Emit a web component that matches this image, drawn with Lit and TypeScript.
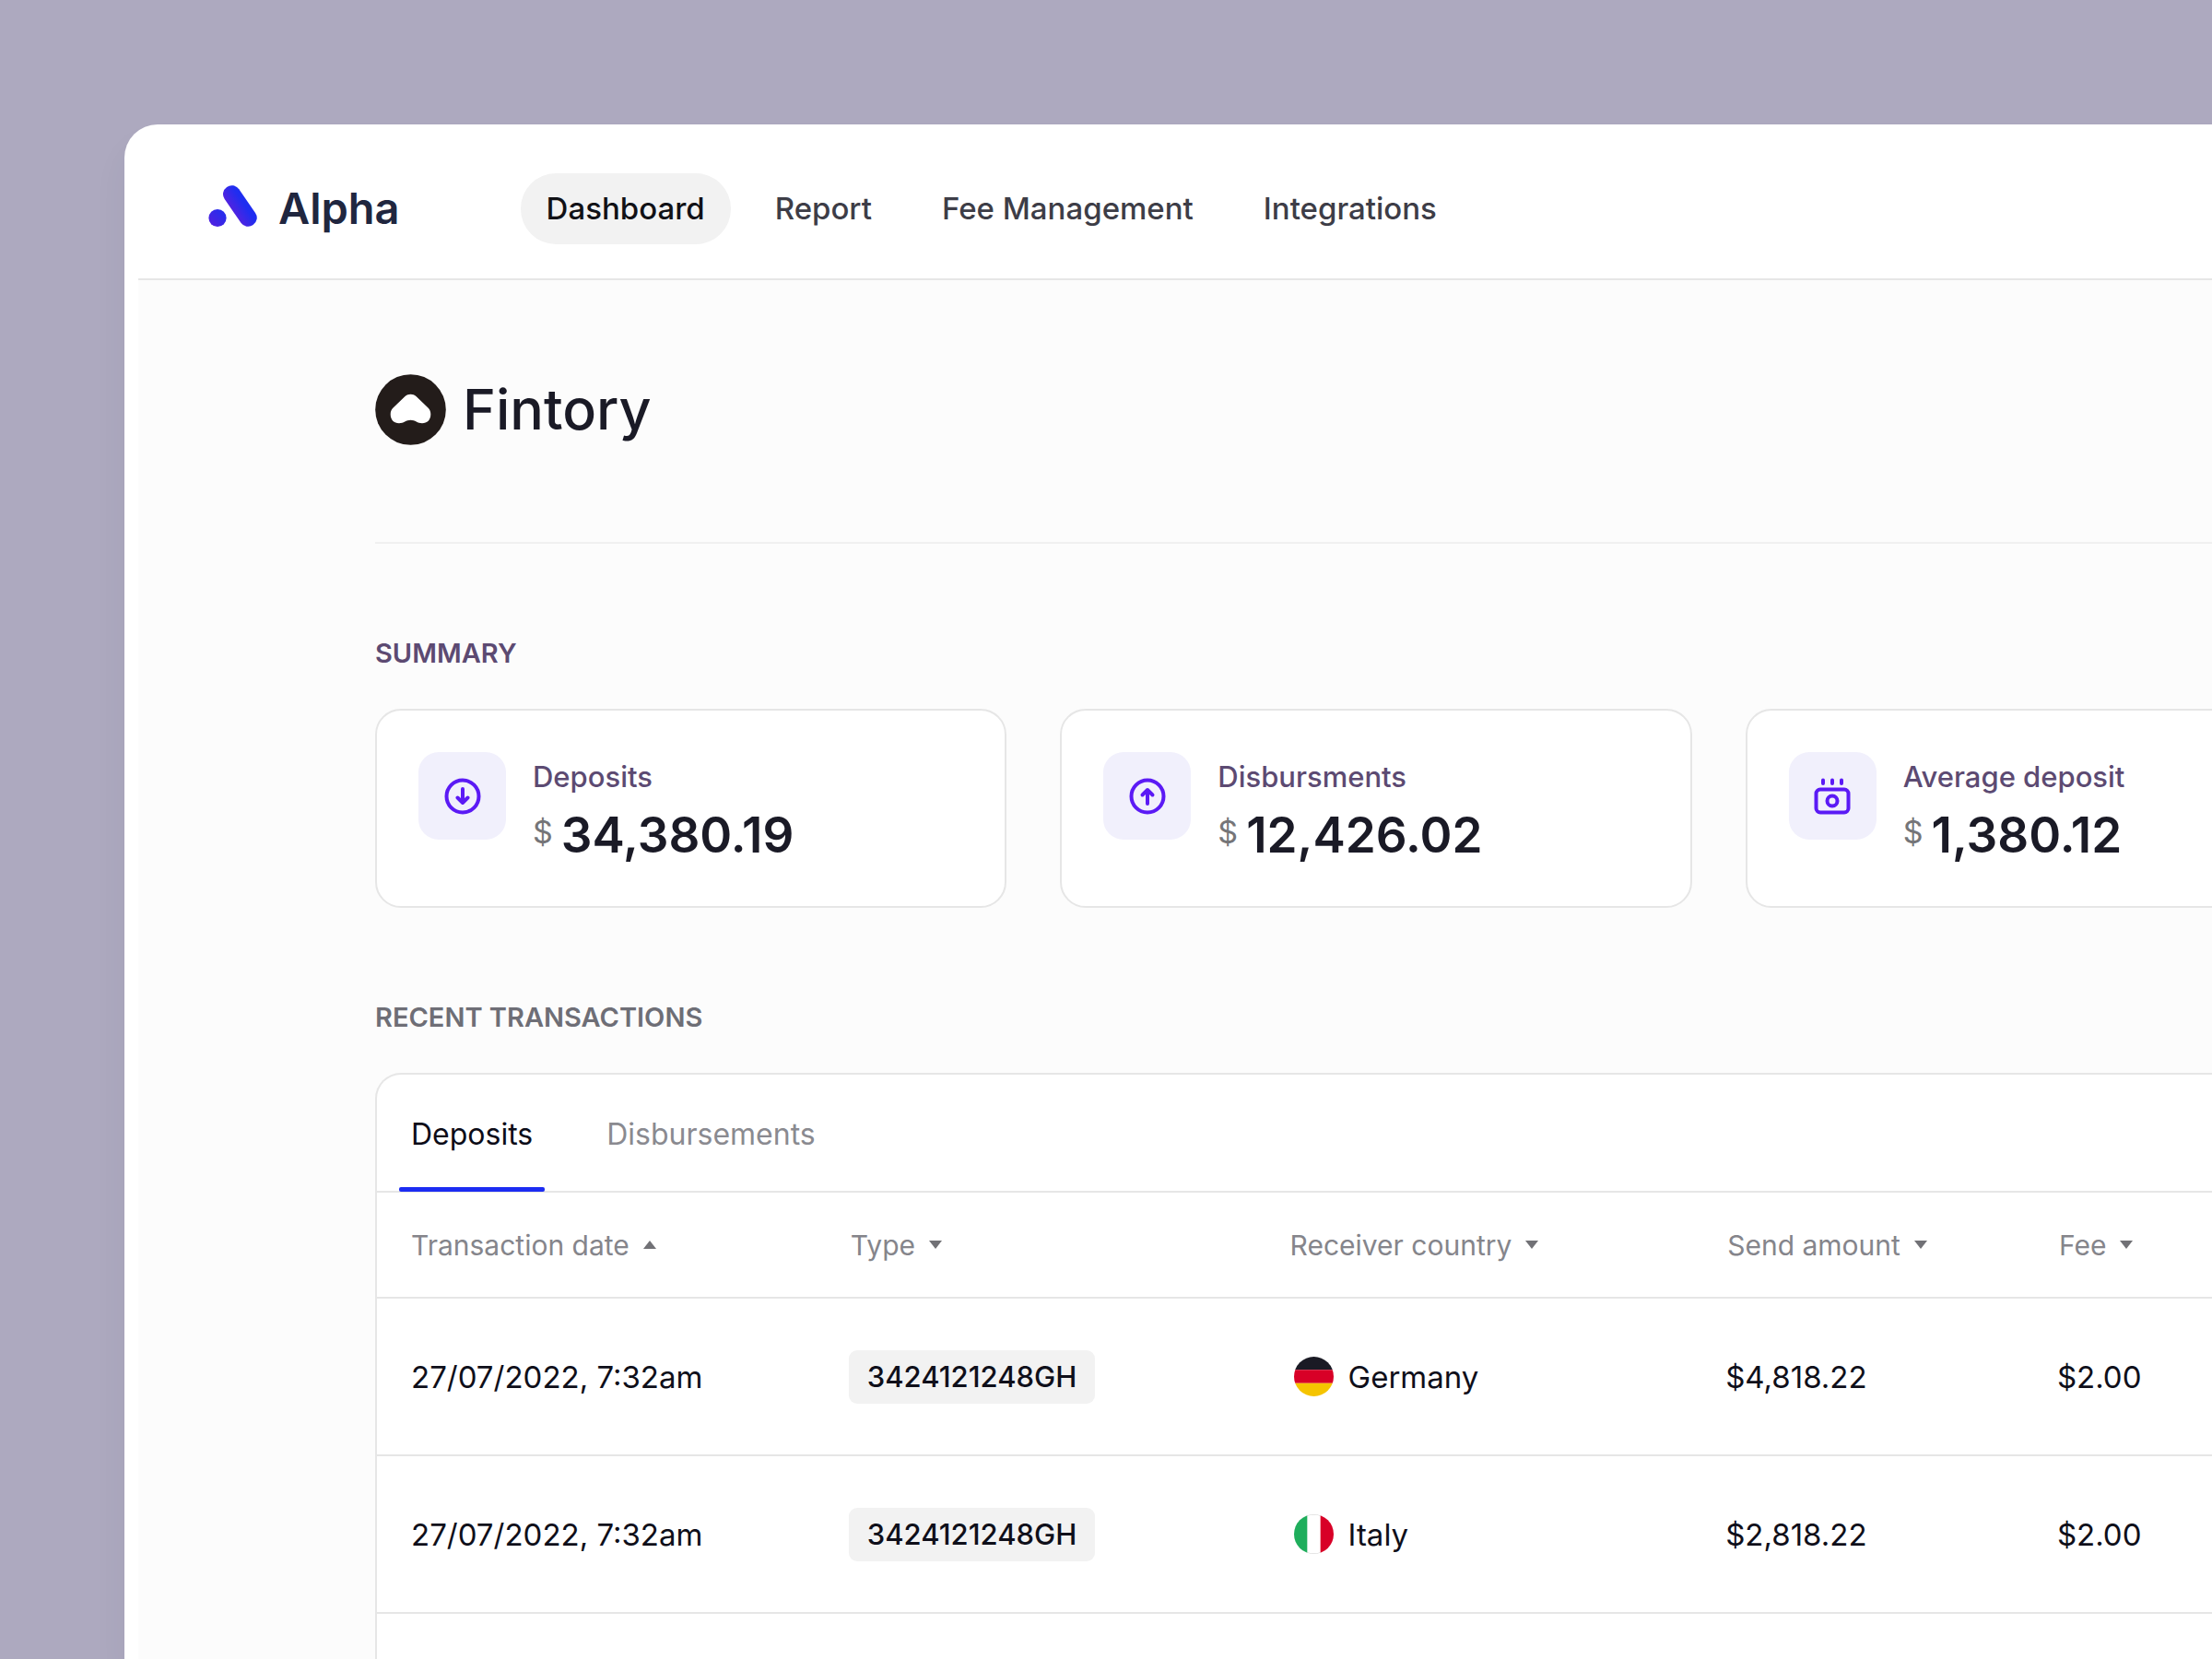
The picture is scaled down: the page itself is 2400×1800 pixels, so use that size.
import { LitElement, html, css, svg } from "lit";
import { customElement, state } from "lit/decorators.js";
import { classMap } from "lit/directives/class-map.js";

const navItems = ["Dashboard", "Report", "Fee Management", "Integrations"];

const icons = {
  down: svg`<circle cx="20" cy="20" r="17.5"/><path d="M20 12V27M14.500 21.500L20 27l5.500-5.500"/>`,
  up: svg`<circle cx="20" cy="20" r="17.500"/><path d="M20 28V13M14.500 18.500L20 13l5.500 5.500"/>`,
  cash: svg`<rect x="2.500" y="12.500" width="35" height="25" rx="4.500"/><circle cx="20" cy="25" r="5.500"/><path d="M10 2.500v3.500M20 2.500v3.500M30 2.500v3.500"/>`,
};

const stats = [
  { label: "Deposits", value: "34,380.19", icon: icons.down },
  { label: "Disbursments", value: "12,426.02", icon: icons.up },
  { label: "Average deposit", value: "1,380.12", icon: icons.cash },
];

const tabs = ["Deposits", "Disbursements"];

const columns = [
  { label: "Transaction date", cls: "c-date", ascending: true },
  { label: "Type", cls: "c-type", ascending: false },
  { label: "Receiver country", cls: "c-country", ascending: false },
  { label: "Send amount", cls: "c-amount", ascending: false },
  { label: "Fee", cls: "c-fee", ascending: false },
];

const flags = {
  Germany: svg`<path fill="#1a1a24" d="M0 0h42v14H0z"/><path fill="#d80027" d="M0 14h42v14H0z"/><path fill="#f5c400" d="M0 28h42v14H0z"/>`,
  Italy: svg`<path fill="#fff" d="M0 0h42v42H0z"/><path fill="#1fae5c" d="M0 0h14v42H0z"/><path fill="#d80027" d="M28 0h14v42H28z"/><path d="M14 1.200a21 21 0 0 1 14 0M14 40.800a21 21 0 0 0 14 0" fill="none" stroke="#000" stroke-opacity=".2"/>`,
};

const rows: { date: string; type: string; country: keyof typeof flags; amount: string; fee: string }[] = [
  { date: "27/07/2022, 7:32am", type: "3424121248GH", country: "Germany", amount: "$4,818.22", fee: "$2.00" },
  { date: "27/07/2022, 7:32am", type: "3424121248GH", country: "Italy", amount: "$2,818.22", fee: "$2.00" },
];

@customElement("app-header")
export class AppHeader extends LitElement {
  static styles = css`
    :host { display: block; }
    .bar { display: flex; align-items: center; margin-left: 15px; padding: 53px 0 37px 76px; border-bottom: 2px solid #e6e6e6; }
    .brand { display: flex; align-items: center; gap: 22px; color: #20263f; text-decoration: none; font-size: 47px; font-weight: 600; line-height: 60px; padding-bottom: 2px; }
    .mark { width: 54px; height: 46px; flex: none; margin-bottom: 3px; }
    .nav { display: flex; gap: 20px; margin-left: 131px; }
    .item { font-size: 33px; line-height: 41px; font-weight: 500; padding: 18px 28px; border-radius: 38px; color: #3d3d47; text-decoration: none; white-space: nowrap; }
    .on { background: #f2f2f2; color: #111116; }
  `;
  render() {
    return html`<header class="bar">
      <a class="brand" href="#">
        <svg class="mark" viewBox="0 0 54 46" aria-hidden="true">
          <defs>
            <linearGradient id="g" gradientUnits="userSpaceOnUse" x1="24" y1="28" x2="38" y2="19">
              <stop offset="0" stop-color="#5722de"/><stop offset="1" stop-color="#1f2df0"/>
            </linearGradient>
            <linearGradient id="d" gradientUnits="userSpaceOnUse" x1="2" y1="42" x2="14" y2="30">
              <stop offset="0" stop-color="#5020e0"/><stop offset="1" stop-color="#2a2cec"/>
            </linearGradient>
          </defs>
          <circle cx="10" cy="35.500" r="9.600" fill="url(#d)"/>
          <path d="M25.500 9.700L43.200 35.300" stroke="url(#g)" stroke-width="19" stroke-linecap="round"/>
        </svg>
        Alpha
      </a>
      <nav class="nav" aria-label="Main">
        ${navItems.map((n, i) => html`<a class=${classMap({ item: true, on: i === 0 })} href="#">${n}</a>`)}
      </nav>
    </header>`;
  }
}

@customElement("stat-cards")
export class StatCards extends LitElement {
  static styles = css`
    :host { display: block; }
    .grid { display: grid; grid-template-columns: repeat(3, 1fr); gap: 58px; }
    .card { display: flex; align-items: flex-start; gap: 29px; background: #fff; border: 2px solid #e6e6e6; border-radius: 28px; padding: 45px 45px 39px; }
    .tile { display: flex; align-items: center; justify-content: center; width: 95px; height: 95px; border-radius: 22px; background: #f1f0fc; flex: none; }
    .icon { width: 40px; height: 40px; fill: none; stroke: #5b1af5; stroke-width: 4; stroke-linecap: round; stroke-linejoin: round; }
    .body { display: flex; flex-direction: column; gap: 1px; padding-top: 3px; }
    .label { font-size: 31px; line-height: 48px; color: #5c4a72; font-weight: 500; }
    .money { display: flex; gap: 9px; align-items: flex-start; }
    .cur { font-size: 34px; line-height: 69px; color: #757578; }
    .value { font-size: 53px; line-height: 76px; font-weight: 600; color: #1a1a26; }
  `;
  render() {
    return html`<div class="grid">
      ${stats.map((s) => html`<article class="card">
        <span class="tile"><svg class="icon" viewBox="0 0 40 40" aria-hidden="true">${s.icon}</svg></span>
        <div class="body">
          <span class="label">${s.label}</span>
          <span class="money"><span class="cur">$</span><span class="value">${s.value}</span></span>
        </div>
      </article>`)}
    </div>`;
  }
}

@customElement("transactions-panel")
export class TransactionsPanel extends LitElement {
  static styles = css`
    :host { display: flex; flex-direction: column; }
    button { font: inherit; color: inherit; background: none; border: 0; margin: 0; padding: 0; cursor: pointer; }
    .panel { flex: 1; background: #fff; border: 2px solid #e6e6e6; border-bottom: 0; border-radius: 28px 28px 0 0; }
    .tabs { display: flex; gap: 54px; padding-left: 24px; border-bottom: 2px solid #e6e6e6; }
    .tab { display: flex; flex-direction: column; font-size: 32px; line-height: 42px; color: #8a8a90; margin-bottom: -1px; }
    .name { padding: 44px 13px 36px; }
    .bar { height: 5px; border-radius: 2px; width: 100%; }
    .on { color: #0c0c18; }
    .on .bar { background: #1c2cf2; }
    .table { width: 100%; border-collapse: collapse; table-layout: fixed; text-align: left; }
    .c-date { width: 21.9%; }
    .c-type { width: 21.9%; }
    .c-country { width: 21.8%; }
    .c-amount { width: 16.5%; }
    th, td { padding: 0; border-bottom: 2px solid #e6e6e6; white-space: nowrap; }
    th { height: 113px; font-weight: 400; font-size: 30px; line-height: 40px; color: #85858b; padding-left: 2px; }
    td { height: 169px; font-size: 33px; line-height: 42px; color: #0f0f1a; }
    .c-date { padding-left: 37px; }
    .sort { display: inline-flex; align-items: center; gap: 15px; }
    .arrow { width: 14px; height: 9px; fill: #717176; }
    .tag { display: inline-block; background: #f2f2f2; border-radius: 9px; padding: 9px 20px; font-size: 31px; line-height: 40px; font-weight: 500; }
    .country { display: flex; align-items: center; gap: 16px; padding-left: 6px; }
    .flag { width: 43px; height: 43px; border-radius: 50%; flex: none; }
  `;
  @state() private active = 0;
  render() {
    return html`<section class="panel">
      <div class="tabs" role="tablist">
        ${tabs.map((t, i) => html`<button class=${classMap({ tab: true, on: i === this.active })} role="tab"
          aria-selected=${i === this.active ? "true" : "false"} @click=${() => (this.active = i)}>
          <span class="name">${t}</span><span class="bar"></span></button>`)}
      </div>
      <table class="table">
        <thead><tr>
          ${columns.map((c) => html`<th class=${c.cls} scope="col"><button class="sort">${c.label}
            <svg class="arrow" viewBox="0 0 14 9" aria-hidden="true"><path d=${c.ascending ? "M7 0L14 9H0z" : "M0 0h14L7 9z"}/></svg></button></th>`)}
        </tr></thead>
        <tbody>
          ${rows.map((r) => html`<tr>
            <td class="c-date">${r.date}</td>
            <td><span class="tag">${r.type}</span></td>
            <td><div class="country"><svg class="flag" viewBox="0 0 42 42" aria-hidden="true">${flags[r.country]}</svg>${r.country}</div></td>
            <td>${r.amount}</td>
            <td>${r.fee}</td>
          </tr>`)}
        </tbody>
      </table>
    </section>`;
  }
}

@customElement("app-root")
export class AppRoot extends LitElement {
  static styles = css`
    :host { display: block; font-family: Inter, "Liberation Sans", sans-serif; }
    .stage { display: flex; box-sizing: border-box; height: 100vh; overflow: hidden; background: #ada9bf; padding: 135px 0 0 135px; }
    .window { display: flex; flex-direction: column; flex: none; width: 120%; background: #fff; border-radius: 36px 0 0 0; box-shadow: 0 24px 36px rgba(50, 50, 90, 0.06); }
    .content { flex: 1; display: flex; flex-direction: column; margin-left: 15px; background: #fcfcfc; padding: 102px 274px 0 257px; }
    .org { display: flex; align-items: center; gap: 18px; padding-bottom: 105px; border-bottom: 2px solid #f0f0f0; }
    .avatar { width: 77px; height: 77px; flex: none; }
    .title { margin: 0; font-size: 61px; line-height: 77px; font-weight: 500; color: #1a1a26; }
    .heading { margin: 0; font-size: 29px; line-height: 36px; font-weight: 600; color: #5c4a72; }
    .summary { padding: 101px 0 42px; }
    .recent { padding: 101px 0 42px; color: #6e6e76; }
    .transactions { flex: 1; }
  `;
  render() {
    return html`<div class="stage"><div class="window">
      <app-header></app-header>
      <main class="content">
        <div class="org">
          <svg class="avatar" viewBox="0 0 77 77" aria-hidden="true">
            <circle cx="38.500" cy="38.500" r="38.300" fill="#231c1a"/>
            <path fill="#fff" d="M32.500 24C36 21 41 21 44.500 24L57.500 36.500C59.500 38.500 60.300 40.500 60.300 43.500C60.300 49.500 56.500 53.300 51 53.300C46 53.300 43.500 49.800 38.500 49.800S31 53.300 26 53.300C20.500 53.300 16.700 49.500 16.700 43.500C16.700 40.500 17.500 38.500 19.500 36.500z"/>
          </svg>
          <h1 class="title">Fintory</h1>
        </div>
        <h2 class="heading summary">SUMMARY</h2>
        <stat-cards></stat-cards>
        <h2 class="heading recent">RECENT TRANSACTIONS</h2>
        <transactions-panel class="transactions"></transactions-panel>
      </main>
    </div></div>`;
  }
}
